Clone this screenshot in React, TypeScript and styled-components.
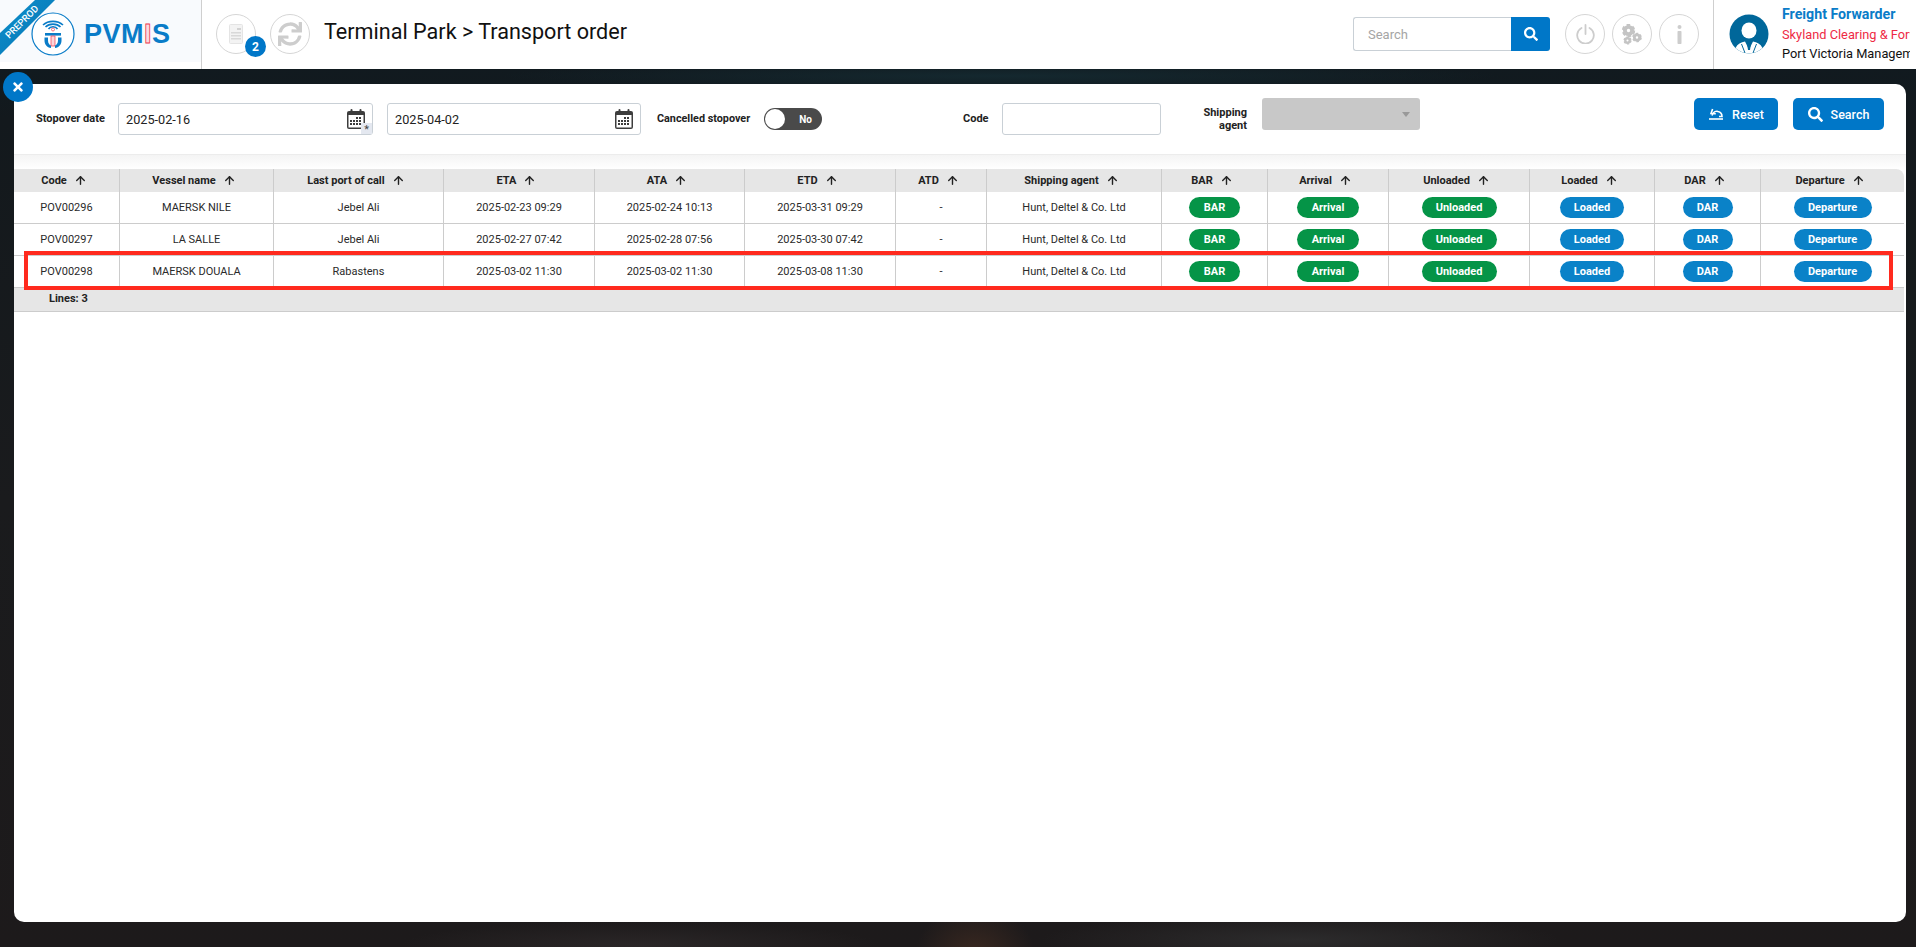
import React from 'react';
import styled, { createGlobalStyle } from 'styled-components';
import { ArrowUp } from 'lucide-react';
import { FaSearch, FaSync, FaTimes } from 'react-icons/fa';

const columns = [
  { label: 'Code', width: 106 },
  { label: 'Vessel name', width: 154 },
  { label: 'Last port of call', width: 170 },
  { label: 'ETA', width: 151 },
  { label: 'ATA', width: 150 },
  { label: 'ETD', width: 151 },
  { label: 'ATD', width: 91 },
  { label: 'Shipping agent', width: 175 },
  { label: 'BAR', width: 106 },
  { label: 'Arrival', width: 121 },
  { label: 'Unloaded', width: 141 },
  { label: 'Loaded', width: 125 },
  { label: 'DAR', width: 106 },
  { label: 'Departure', width: 143 },
];

const rows = [
  ['POV00296', 'MAERSK NILE', 'Jebel Ali', '2025-02-23 09:29', '2025-02-24 10:13', '2025-03-31 09:29', '-', 'Hunt, Deltel & Co. Ltd'],
  ['POV00297', 'LA SALLE', 'Jebel Ali', '2025-02-27 07:42', '2025-02-28 07:56', '2025-03-30 07:42', '-', 'Hunt, Deltel & Co. Ltd'],
  ['POV00298', 'MAERSK DOUALA', 'Rabastens', '2025-03-02 11:30', '2025-03-02 11:30', '2025-03-08 11:30', '-', 'Hunt, Deltel & Co. Ltd'],
];

const pills = [
  { label: 'BAR', width: 51, color: '#059447' },
  { label: 'Arrival', width: 62, color: '#059447' },
  { label: 'Unloaded', width: 75, color: '#059447' },
  { label: 'Loaded', width: 64, color: '#0a82c8' },
  { label: 'DAR', width: 50, color: '#0a82c8' },
  { label: 'Departure', width: 78, color: '#0a82c8' },
];

export default function App() {
  return (
    <Page>
      <GlobalStyle />
      <Header>
        <Brand>
          <Ribbon>
            <span>PREPROD</span>
          </Ribbon>
          <LogoMark />
          <LogoText>
            PVM<LogoI>I</LogoI>S
          </LogoText>
        </Brand>
        <RoundIcons>
          <RoundIcon>
            <DocIcon />
            <Badge>2</Badge>
          </RoundIcon>
          <RoundIcon>
            <FaSync size={24} />
          </RoundIcon>
        </RoundIcons>
        <Title>Terminal Park &gt; Transport order</Title>
        <TopSearch>
          <TopSearchInput placeholder='Search' />
          <TopSearchButton>
            <FaSearch size={14} />
          </TopSearchButton>
        </TopSearch>
        <ToolIcons>
          <RoundIcon>
            <PowerIcon />
          </RoundIcon>
          <RoundIcon>
            <GearsIcon />
          </RoundIcon>
          <RoundIcon>
            <InfoIcon />
          </RoundIcon>
        </ToolIcons>
        <UserBox>
          <Avatar />
          <UserText>
            <UserRole>Freight Forwarder</UserRole>
            <UserCompany>Skyland Clearing &amp; Forwarding</UserCompany>
            <UserOrg>Port Victoria Management</UserOrg>
          </UserText>
        </UserBox>
      </Header>

      <Main>
        <Panel>
          <CloseButton>
            <FaTimes size={14} />
          </CloseButton>
          <Filters>
            <DateLabel>Stopover date</DateLabel>
            <DateField $width={255}>
              <DateValue>2025-02-16</DateValue>
              <CalendarIcon />
              <Required>*</Required>
            </DateField>
            <DateField $width={254}>
              <DateValue>2025-04-02</DateValue>
              <CalendarIcon />
            </DateField>
            <CancelledLabel>Cancelled stopover</CancelledLabel>
            <Toggle>
              <ToggleKnob />
              No
            </Toggle>
            <CodeLabel>Code</CodeLabel>
            <CodeInput />
            <AgentLabel>
              Shipping
              <br />
              agent
            </AgentLabel>
            <AgentSelect>
              <Caret />
            </AgentSelect>
            <Actions>
              <ActionButton $width={84}>
                <ResetIcon />
                Reset
              </ActionButton>
              <ActionButton $width={91}>
                <FaSearch size={15} />
                Search
              </ActionButton>
            </Actions>
          </Filters>
          <Shade />
          <TableWrap>
            <Table>
              <colgroup>
                {columns.map((c) => (
                  <Col key={c.label} $width={c.width} />
                ))}
              </colgroup>
              <thead>
                <tr>
                  {columns.map((c) => (
                    <Th key={c.label}>
                      <ThInner>
                        {c.label}
                        <ArrowUp size={13} strokeWidth={2.6} />
                      </ThInner>
                    </Th>
                  ))}
                </tr>
              </thead>
              <tbody>
                {rows.map((row) => (
                  <Tr key={row[0]}>
                    {row.map((cell, j) => (
                      <Td key={j}>{cell}</Td>
                    ))}
                    {pills.map((p) => (
                      <Td key={p.label}>
                        <Pill $width={p.width} $color={p.color}>
                          {p.label}
                        </Pill>
                      </Td>
                    ))}
                  </Tr>
                ))}
              </tbody>
            </Table>
            <TableFooter>Lines: 3</TableFooter>
            <Highlight />
          </TableWrap>
        </Panel>
      </Main>
    </Page>
  );
}

function LogoMark() {
  return (
    <LogoSvg viewBox='0 0 44 44'>
      <circle cx='22' cy='22' r='21' fill='#fff' stroke='#0a7cc8' strokeWidth='1.2' />
      <path d='M12 13a13 10 0 0 1 20 0' fill='none' stroke='#0a7cc8' strokeWidth='1.6' />
      <path d='M14.5 15a9.5 7.5 0 0 1 15 0' fill='none' stroke='#0a7cc8' strokeWidth='1.6' />
      <path d='M17.5 17a5 4 0 0 1 9 0' fill='none' stroke='#0a7cc8' strokeWidth='1.6' />
      <circle cx='22' cy='17.5' r='1.5' fill='#fff' stroke='#ee3a4f' strokeWidth='0.7' />
      <rect x='14' y='21' width='16' height='2.6' fill='#0a7cc8' />
      <rect x='20' y='24' width='4' height='10' fill='#fbd5da' stroke='#ee3a4f' strokeWidth='0.7' />
      <path
        d='M13.500 25.500h3.500v3c0 2.800 1.500 4.500 3 5v2.500c-4-.5-6.500-3.500-6.500-7.500zM30.500 25.500h-3.500v3c0 2.800-1.500 4.500-3 5v2.500c4-.5 6.500-3.500 6.500-7.500z'
        fill='#0a7cc8'
      />
    </LogoSvg>
  );
}

function DocIcon() {
  return (
    <svg width='14' height='20' viewBox='0 0 14 20'>
      <rect x='0.5' y='0.5' width='13' height='19' rx='1' fill='#f3f3f3' stroke='#e4e4e4' />
      <rect x='8' y='4' width='4' height='2' fill='#d2d2d2' />
      <rect x='2' y='8' width='10' height='1.500' fill='#d8d8d8' />
      <rect x='2' y='11' width='10' height='1.500' fill='#d8d8d8' />
      <rect x='2' y='14' width='10' height='1.500' fill='#d8d8d8' />
    </svg>
  );
}

function PowerIcon() {
  return (
    <svg width='19' height='20' viewBox='0 0 19 20' fill='none' stroke='#cdcdcd' strokeWidth='1.800' strokeLinecap='round'>
      <path d='M9.500 1v9' />
      <path d='M5.500 4a8.300 8.300 0 1 0 8 0' />
    </svg>
  );
}

function Gear({ cx, cy, r }: { cx: number; cy: number; r: number }) {
  return (
    <g fill='none' stroke='#c4c4c4'>
      <circle cx={cx} cy={cy} r={r * 0.58} strokeWidth={r * 0.62} />
      <circle cx={cx} cy={cy} r={r * 0.9} strokeWidth={r * 0.36} strokeDasharray={`${r * 0.55} ${r * 0.41}`} />
    </g>
  );
}

function GearsIcon() {
  return (
    <svg width='20' height='21' viewBox='0 0 20 21'>
      <Gear cx={6.5} cy={6.5} r={6.2} />
      <Gear cx={15} cy={13.5} r={4.5} />
      <Gear cx={5.5} cy={16.5} r={3.8} />
    </svg>
  );
}

function InfoIcon() {
  return (
    <svg width='5' height='19' viewBox='0 0 5 19' fill='#cdcdcd'>
      <circle cx='2.500' cy='2' r='2' />
      <rect x='0.500' y='6' width='4' height='13' rx='0.800' />
    </svg>
  );
}

function Avatar() {
  return (
    <AvatarSvg viewBox='0 0 40 40'>
      <circle cx='20' cy='20' r='19.500' fill='#00679a' />
      <ellipse cx='20' cy='16.500' rx='7.500' ry='8' fill='#fff' />
      <path d='M6.500 34c2-4 5.500-6 9.500-6.500l4 8 4-8c4 .5 7.500 2.500 9.500 6.500a19.500 19.500 0 0 1-27 0z' fill='#fff' />
      <path d='M18.800 27.500h2.400l.8 2-1 6.500h-2l-1-6.500z' fill='#00679a' />
      <path d='M12.500 30l3.500 9M27.500 30l-3.500 9' stroke='#00679a' strokeWidth='1' />
    </AvatarSvg>
  );
}

function CalendarIcon() {
  return (
    <CalendarSvg viewBox='0 0 18 20'>
      <rect x='0' y='2' width='18' height='18' rx='2' fill='#3d3d3d' />
      <rect x='3.500' y='0' width='2' height='4' rx='1' fill='#3d3d3d' />
      <rect x='12.500' y='0' width='2' height='4' rx='1' fill='#3d3d3d' />
      <rect x='1.500' y='6' width='15' height='12.500' fill='#fff' />
      {[0, 1, 2, 3].map((c) =>
        [0, 1, 2].map((r) =>
          c < 2 && r === 0 ? null : <rect key={`${c}-${r}`} x={3 + c * 3} y={8 + r * 3} width='2' height='2' fill='#3d3d3d' />,
        ),
      )}
    </CalendarSvg>
  );
}

function ResetIcon() {
  return (
    <svg width='16' height='12' viewBox='0 0 16 12' fill='none' stroke='#fff' strokeWidth='1.600'>
      <path d='M1 11h14' />
      <path d='M4 7.500C5 4 8 3 10 3.500c2.500.5 4 2.500 4 5h-3' />
      <path d='M4.600 1L3 5.500l4.800.2' />
    </svg>
  );
}

const GlobalStyle = createGlobalStyle`
  html, body {
    margin: 0;
    padding: 0;
    height: 100%;
    overflow: hidden;
    font-family: Roboto, "Liberation Sans", sans-serif;
  }
  * {
    box-sizing: border-box;
  }
`;

const Page = styled.div`
  width: 1916px;
  height: 947px;
  display: flex;
  flex-direction: column;
  background:
    radial-gradient(ellipse 60px 50px at 975px 955px, #3a2820 0%, rgba(58, 40, 32, 0) 100%),
    radial-gradient(ellipse 260px 26px at 1300px 940px, #2c2b2c 0%, rgba(44, 43, 44, 0) 100%),
    radial-gradient(ellipse 240px 24px at 640px 945px, #2a2627 0%, rgba(42, 38, 39, 0) 100%),
    radial-gradient(ellipse 500px 14px at 1000px 76px, #14282f 0%, rgba(20, 40, 47, 0) 100%),
    linear-gradient(180deg, #0e1b22 0px, #13191d 120px, #1a1b1d 500px, #1d1a1b 947px);
`;

const Header = styled.header`
  height: 69px;
  flex: none;
  display: flex;
  background: #fff;
`;

const Brand = styled.div`
  position: relative;
  width: 202px;
  height: 69px;
  flex: none;
  display: flex;
  align-items: flex-start;
  padding: 12px 0 0 31px;
  border-right: 1px solid #cfcfcf;
  background: linear-gradient(180deg, #f8fafd 0, #f8fafd 62px, #fff 62px);
  overflow: hidden;
`;

const Ribbon = styled.div`
  position: absolute;
  left: 0;
  top: 0;
  width: 55px;
  height: 55px;
  background: linear-gradient(135deg, #0f8fcb, #0474b4);
  clip-path: polygon(35px 0, 55px 0, 0 55px, 0 33px);

  span {
    position: absolute;
    left: -1px;
    top: 16px;
    width: 46px;
    text-align: center;
    color: #fff;
    font-size: 9.5px;
    font-weight: 500;
    line-height: 12px;
    transform: rotate(-45deg);
  }
`;

const LogoSvg = styled.svg`
  width: 44px;
  height: 44px;
  flex: none;
`;

const LogoText = styled.div`
  margin: 7px 0 0 9px;
  font-family: 'Liberation Sans', Arial, sans-serif;
  font-size: 27px;
  font-weight: 700;
  line-height: 30px;
  letter-spacing: 0.5px;
  color: #0a7cc8;
`;

const LogoI = styled.span`
  color: #fbdde1;
  -webkit-text-stroke: 0.8px #ee3a4f;
`;

const RoundIcons = styled.div`
  display: flex;
  gap: 14px;
  margin: 14px 0 0 14px;
`;

const RoundIcon = styled.div`
  position: relative;
  width: 40px;
  height: 40px;
  flex: none;
  border: 1px solid #d6d6d6;
  border-radius: 50%;
  display: flex;
  align-items: center;
  justify-content: center;
  color: #cdcdcd;
`;

const Badge = styled.span`
  position: absolute;
  right: -11px;
  bottom: -4px;
  width: 21px;
  height: 21px;
  border-radius: 50%;
  background: #0077c8;
  color: #fff;
  font-size: 12px;
  font-weight: 700;
  display: flex;
  align-items: center;
  justify-content: center;
`;

const Title = styled.h1`
  margin: 17px 0 0 14px;
  font-size: 21.6px;
  font-weight: 400;
  line-height: 30px;
  color: #111;
  white-space: nowrap;
`;

const TopSearch = styled.div`
  display: flex;
  width: 197px;
  height: 34px;
  margin: 17px 0 0 auto;
`;

const TopSearchInput = styled.input`
  width: 158px;
  height: 34px;
  padding: 0 14px;
  border: 1px solid #c9d0d6;
  border-right: none;
  border-radius: 3px 0 0 3px;
  font-family: inherit;
  font-size: 13px;
  outline: none;

  &::placeholder {
    color: #a5a5a5;
  }
`;

const TopSearchButton = styled.button`
  width: 39px;
  height: 34px;
  padding: 0;
  border: none;
  border-radius: 0 3px 3px 0;
  background: #0077c8;
  color: #fff;
  display: flex;
  align-items: center;
  justify-content: center;
`;

const ToolIcons = styled.div`
  display: flex;
  gap: 7px;
  margin: 14px 0 0 15px;
`;

const UserBox = styled.div`
  width: 203px;
  height: 69px;
  flex: none;
  margin-left: 14px;
  padding-left: 15px;
  border-left: 1px solid #cfcfcf;
  display: flex;
  overflow: hidden;
`;

const AvatarSvg = styled.svg`
  width: 40px;
  height: 40px;
  flex: none;
  margin-top: 14px;
`;

const UserText = styled.div`
  width: 128px;
  margin-left: 13px;
  padding-top: 5px;
  overflow: hidden;
  white-space: nowrap;
`;

const UserRole = styled.div`
  font-size: 14.2px;
  font-weight: 700;
  line-height: 18px;
  color: #0a7cc8;
`;

const UserCompany = styled.div`
  margin-top: 3px;
  font-size: 12.8px;
  line-height: 18px;
  color: #ee2a45;
`;

const UserOrg = styled.div`
  margin-top: 1px;
  font-size: 12.8px;
  line-height: 18px;
  color: #111;
`;

const Main = styled.main`
  flex: 1;
  min-height: 0;
  padding: 15px 10px 25px 14px;
  display: flex;
`;

const Panel = styled.section`
  position: relative;
  flex: 1;
  background: #fff;
  border-radius: 10px;
`;

const CloseButton = styled.button`
  position: absolute;
  left: -11px;
  top: -12px;
  width: 30px;
  height: 30px;
  padding: 0;
  border: none;
  border-radius: 50%;
  background: #0077c8;
  color: #fff;
  display: flex;
  align-items: center;
  justify-content: center;
`;

const Filters = styled.div`
  height: 70px;
  padding: 19px 22px 0 22px;
  display: flex;
  align-items: flex-start;
`;

const FieldLabel = styled.label`
  font-size: 11px;
  font-weight: 700;
  line-height: 13px;
  color: #222;
  white-space: nowrap;
`;

const DateLabel = styled(FieldLabel)`
  width: 82px;
  margin-top: 9px;
`;

const DateField = styled.div<{ $width: number }>`
  position: relative;
  width: ${({ $width }) => $width}px;
  height: 32px;
  margin-right: 14px;
  padding: 0 7px 0 7px;
  border: 1px solid #c9d0d6;
  border-radius: 3px;
  display: flex;
  align-items: center;
  justify-content: space-between;
`;

const DateValue = styled.span`
  font-size: 12.7px;
  color: #222;
`;

const CalendarSvg = styled.svg`
  width: 18px;
  height: 20px;
`;

const Required = styled.span`
  position: absolute;
  right: 0;
  bottom: 0;
  width: 11px;
  height: 11px;
  background: #e4e8f0;
  font-size: 11px;
  line-height: 13px;
  text-align: center;
  color: #444;
`;

const CancelledLabel = styled(FieldLabel)`
  width: 107px;
  margin: 9px 0 0 2px;
  font-size: 10.8px;
`;

const Toggle = styled.div`
  width: 58px;
  height: 22px;
  margin-top: 5px;
  padding-right: 10px;
  border-radius: 11px;
  background: #4a4a4a;
  color: #fff;
  font-size: 10px;
  font-weight: 700;
  display: flex;
  align-items: center;
  justify-content: space-between;
`;

const ToggleKnob = styled.span`
  width: 20px;
  height: 20px;
  margin-left: 1px;
  border-radius: 50%;
  background: #fff;
`;

const CodeLabel = styled(FieldLabel)`
  width: 39px;
  margin: 9px 0 0 141px;
`;

const CodeInput = styled.input`
  width: 159px;
  height: 32px;
  border: 1px solid #c9d0d6;
  border-radius: 3px;
  outline: none;
`;

const AgentLabel = styled(FieldLabel)`
  width: 86px;
  margin-top: 3px;
  text-align: right;
`;

const AgentSelect = styled.div`
  width: 158px;
  height: 32px;
  margin: -5px 0 0 15px;
  padding-right: 10px;
  border-radius: 3px;
  background: #c8c8c8;
  display: flex;
  align-items: center;
  justify-content: flex-end;
`;

const Caret = styled.span`
  width: 0;
  height: 0;
  border-left: 4.500px solid transparent;
  border-right: 4.500px solid transparent;
  border-top: 5px solid #999;
`;

const Actions = styled.div`
  display: flex;
  gap: 15px;
  margin: -5px 0 0 auto;
`;

const ActionButton = styled.button<{ $width: number }>`
  width: ${({ $width }) => $width}px;
  height: 32px;
  padding: 0;
  border: none;
  border-radius: 5px;
  background: #0077c8;
  color: #fff;
  font-family: inherit;
  font-size: 12.5px;
  font-weight: 500;
  display: flex;
  align-items: center;
  justify-content: center;
  gap: 8px;
`;

const Shade = styled.div`
  height: 15px;
  border-top: 1px solid #ececec;
  background: linear-gradient(180deg, #f4f4f4, #fff);
`;

const TableWrap = styled.div`
  position: relative;
  margin: 0 2px 0 0;
`;

const Table = styled.table`
  width: 1890px;
  table-layout: fixed;
  border-collapse: separate;
  border-spacing: 0;
`;

const Col = styled.col<{ $width: number }>`
  width: ${({ $width }) => $width}px;
`;

const Th = styled.th`
  height: 23px;
  padding: 0;
  background: #e6e6e6;
  border-right: 1px solid #ccc;
  font-size: 11px;
  font-weight: 700;
  color: #222;

  &:last-child {
    border-right: none;
    border-top-right-radius: 8px;
  }
`;

const ThInner = styled.div`
  display: flex;
  align-items: center;
  justify-content: center;
  gap: 7px;
  padding-right: 5px;
`;

const Tr = styled.tr`
  height: 32px;
`;

const Td = styled.td`
  padding: 0;
  border-right: 1px solid #ccc;
  border-bottom: 1px solid #ccc;
  font-size: 11px;
  color: #2a2a2a;
  text-align: center;

  &:last-child {
    border-right: none;
  }
`;

const Pill = styled.span<{ $width: number; $color: string }>`
  width: ${({ $width }) => $width}px;
  height: 21px;
  margin: -1px auto 0;
  border-radius: 11px;
  background: ${({ $color }) => $color};
  color: #fff;
  font-size: 11px;
  font-weight: 700;
  display: flex;
  align-items: center;
  justify-content: center;
`;

const TableFooter = styled.div`
  height: 24px;
  padding: 2px 0 0 35px;
  background: #e6e6e6;
  border-bottom: 1px solid #ccc;
  font-size: 11px;
  font-weight: 700;
  line-height: 18px;
  color: #222;
`;

const Highlight = styled.div`
  position: absolute;
  left: 10px;
  top: 82px;
  width: 1869px;
  height: 39px;
  border: 4px solid #ff2a1e;
  pointer-events: none;
`;
